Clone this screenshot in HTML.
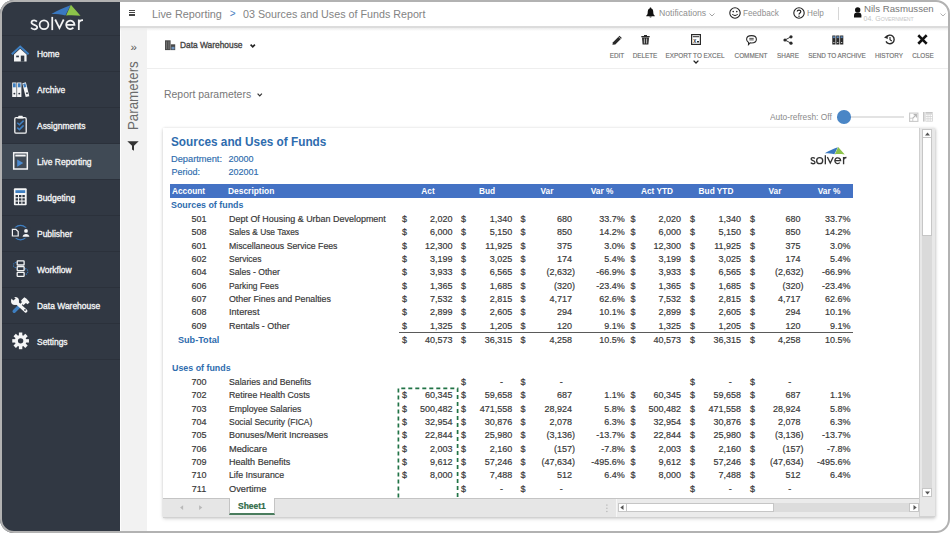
<!DOCTYPE html>
<html><head><meta charset="utf-8">
<style>
*{margin:0;padding:0;box-sizing:border-box}
html,body{width:950px;height:533px;overflow:hidden;background:#fff;font-family:"Liberation Sans",sans-serif}
.a{position:absolute;white-space:nowrap;line-height:normal}
svg.a{overflow:visible}
</style></head><body>
<div class="a" style="left:0;top:0;width:120px;height:533px;background:#313843"></div>
<svg class="a" style="left:0;top:0" width="120" height="36" viewBox="0 0 120 36"><g transform="translate(30.5 30.1)"><path d="M20.9 -16.1 C27 -19.5 33 -22.5 40 -24.9 L34.9 -14.7 C30 -15.8 25 -16.2 20.9 -16.1 Z" fill="#3a78c0"/>
<path d="M40.4 -25.3 L50 -14.3 C45 -15 40 -15 35.6 -14.7 Z" fill="#8cc34a"/>
<g fill="none" stroke="#f2f3f4" stroke-width="1.75">
<path d="M6.4 -8.5 C5.6 -9.4 4.7 -9.8 3.7 -9.8 C2.1 -9.8 1.0 -8.9 1.0 -7.6 C1.0 -4.8 6.7 -5.8 6.7 -2.8 C6.7 -1.5 5.5 -0.85 3.9 -0.85 C2.4 -0.85 1.3 -1.4 0.6 -2.5"/>
<circle cx="13.5" cy="-5.3" r="4.4"/>
<path d="M21.75 -13.2 V0"/>
<path d="M24.7 -10.6 L28.95 -2.0 L33.2 -10.6" stroke-linejoin="miter"/>
<path d="M35.6 -5.3 H44 A4.2 4.2 0 1 0 42.9 -2.4"/>
<path d="M48.3 0 V-10.6 M48.3 -6.2 C48.3 -8.6 50 -9.9 52.5 -9.9"/>
</g></g></svg>
<div class="a" style="left:2px;top:35px;width:118px;height:1px;background:#2b313b"></div>
<div class="a" style="left:2px;top:71px;width:118px;height:1px;background:#2b313b"></div>
<div class="a" style="left:2px;top:107px;width:118px;height:1px;background:#2b313b"></div>
<div class="a" style="left:2px;top:143px;width:118px;height:1px;background:#2b313b"></div>
<div class="a" style="left:2px;top:179px;width:118px;height:1px;background:#2b313b"></div>
<div class="a" style="left:2px;top:215px;width:118px;height:1px;background:#2b313b"></div>
<div class="a" style="left:2px;top:251px;width:118px;height:1px;background:#2b313b"></div>
<div class="a" style="left:2px;top:287px;width:118px;height:1px;background:#2b313b"></div>
<div class="a" style="left:2px;top:323px;width:118px;height:1px;background:#2b313b"></div>
<div class="a" style="left:2px;top:359px;width:118px;height:1px;background:#2b313b"></div>
<div class="a" style="left:2px;top:144px;width:118px;height:35px;background:#404a55"></div>
<div class="a" style="left:36.80px;top:49.06px;font-size:9px;color:#f2f3f4;font-weight:400;transform:scaleX(0.94);transform-origin:0 0;-webkit-text-stroke:0.35px #f2f3f4;">Home</div>
<div class="a" style="left:36.80px;top:85.06px;font-size:9px;color:#f2f3f4;font-weight:400;transform:scaleX(0.94);transform-origin:0 0;-webkit-text-stroke:0.35px #f2f3f4;">Archive</div>
<div class="a" style="left:36.80px;top:121.05px;font-size:9px;color:#f2f3f4;font-weight:400;transform:scaleX(0.94);transform-origin:0 0;-webkit-text-stroke:0.35px #f2f3f4;">Assignments</div>
<div class="a" style="left:36.80px;top:157.05px;font-size:9px;color:#f2f3f4;font-weight:400;transform:scaleX(0.94);transform-origin:0 0;-webkit-text-stroke:0.35px #f2f3f4;">Live Reporting</div>
<div class="a" style="left:36.80px;top:193.05px;font-size:9px;color:#f2f3f4;font-weight:400;transform:scaleX(0.94);transform-origin:0 0;-webkit-text-stroke:0.35px #f2f3f4;">Budgeting</div>
<div class="a" style="left:36.80px;top:229.05px;font-size:9px;color:#f2f3f4;font-weight:400;transform:scaleX(0.94);transform-origin:0 0;-webkit-text-stroke:0.35px #f2f3f4;">Publisher</div>
<div class="a" style="left:36.80px;top:265.06px;font-size:9px;color:#f2f3f4;font-weight:400;transform:scaleX(0.94);transform-origin:0 0;-webkit-text-stroke:0.35px #f2f3f4;">Workflow</div>
<div class="a" style="left:36.80px;top:301.06px;font-size:9px;color:#f2f3f4;font-weight:400;transform:scaleX(0.94);transform-origin:0 0;-webkit-text-stroke:0.35px #f2f3f4;">Data Warehouse</div>
<div class="a" style="left:36.80px;top:337.06px;font-size:9px;color:#f2f3f4;font-weight:400;transform:scaleX(0.94);transform-origin:0 0;-webkit-text-stroke:0.35px #f2f3f4;">Settings</div>
<svg class="a" style="left:8px;top:42px" width="24" height="24" viewBox="8 42 24 24"><path d="M11.8 54.3 L20.2 46.6 L28.6 54.3" fill="none" stroke="#3e7fc1" stroke-width="2"/><path d="M14 54.5 L20.2 48.8 L26.6 54.5 V61.6 H14 Z" fill="#f4f5f6"/><rect x="16.2" y="55.6" width="2.7" height="1.7" fill="#313843"/><rect x="20.8" y="55.6" width="3.5" height="6.1" fill="#313843"/></svg>
<svg class="a" style="left:8px;top:78px" width="24" height="24" viewBox="8 78 24 24"><rect x="12.2" y="82.5" width="4.3" height="14.5" fill="#f4f5f6"/><rect x="17.1" y="82.5" width="4.3" height="14.5" fill="#f4f5f6"/><path d="M22.3 83.2 L25.9 82.3 L29.3 96.2 L25.7 97.1 Z" fill="#f4f5f6"/><rect x="13" y="83.3" width="2.7" height="4" fill="#3e7fc1"/><rect x="17.9" y="83.3" width="2.7" height="4" fill="#3e7fc1"/><path d="M23.1 83.9 L25.4 83.3 L26.3 87 L24 87.6 Z" fill="#3e7fc1"/><circle cx="14.35" cy="93.6" r="0.95" fill="#313843"/><circle cx="19.25" cy="93.6" r="0.95" fill="#313843"/><circle cx="27" cy="93.3" r="0.95" fill="#313843"/></svg>
<svg class="a" style="left:8px;top:112px" width="24" height="24" viewBox="8 112 24 24"><rect x="14.8" y="117.6" width="11.4" height="15.6" rx="1.3" fill="none" stroke="#f4f5f6" stroke-width="1.3"/><path d="M17.3 118.6 L18.6 115.8 H22.4 L23.7 118.6 Z" fill="#f4f5f6"/><path d="M17.3 122.8 L19.4 124.8 L23.6 120.6 M17.3 127.6 L19.4 129.6 L23.6 125.4" fill="none" stroke="#3e7fc1" stroke-width="1.5"/></svg>
<svg class="a" style="left:8px;top:148px" width="24" height="24" viewBox="8 148 24 24"><rect x="13.7" y="152.8" width="13.6" height="16.2" fill="none" stroke="#f4f5f6" stroke-width="1.5"/><rect x="15.3" y="154.6" width="10.4" height="1.9" fill="#f4f5f6"/><path d="M17.2 159.4 L23.3 163 L17.2 166.7 Z" fill="#4a8ad0"/></svg>
<svg class="a" style="left:8px;top:184px" width="24" height="24" viewBox="8 184 24 24"><rect x="13.9" y="188.2" width="12.8" height="17.1" rx="1" fill="#f4f5f6"/><rect x="15.4" y="190.2" width="9.8" height="2.8" fill="#3e7fc1"/><rect x="15.6" y="195.0" width="2.4" height="2.2" fill="#313843"/><rect x="19.0" y="195.0" width="2.4" height="2.2" fill="#313843"/><rect x="22.4" y="195.0" width="2.4" height="2.2" fill="#313843"/><rect x="15.6" y="198.3" width="2.4" height="2.2" fill="#313843"/><rect x="19.0" y="198.3" width="2.4" height="2.2" fill="#313843"/><rect x="22.4" y="198.3" width="2.4" height="2.2" fill="#313843"/><rect x="15.6" y="201.6" width="2.4" height="2.2" fill="#313843"/><rect x="19.0" y="201.6" width="2.4" height="2.2" fill="#313843"/><rect x="22.4" y="201.6" width="2.4" height="2.2" fill="#313843"/></svg>
<svg class="a" style="left:8px;top:222px" width="26" height="20" viewBox="8 222 26 20"><circle cx="20.5" cy="232.6" r="7.2" fill="none" stroke="#3e7fc1" stroke-width="1.2"/><rect x="10.5" y="227.5" width="9" height="10.5" fill="#313843"/><rect x="21" y="227.8" width="9.5" height="10" fill="#313843"/><path d="M12.4 229.3 H15.9 L18.2 231.6 V236 H12.4 Z" fill="none" stroke="#f4f5f6" stroke-width="1.2"/><circle cx="26" cy="230.9" r="1.9" fill="#f4f5f6"/><path d="M22.6 236.8 C22.6 232.9 29.4 232.9 29.4 236.8 Z" fill="#f4f5f6"/></svg>
<svg class="a" style="left:8px;top:256px" width="24" height="26" viewBox="8 256 24 26"><path d="M16.3 262.4 C12.5 262.6 12.5 267.6 16.3 267.8 M25 268.6 C28.8 268.8 28.8 274.2 25 274.4" fill="none" stroke="#3e7fc1" stroke-width="1.1" stroke-dasharray="1.3 1"/><rect x="17.2" y="260.9" width="6.9" height="4.1" rx="0.6" fill="none" stroke="#f4f5f6" stroke-width="1.3"/><rect x="17.2" y="266.6" width="6.9" height="4.1" rx="0.6" fill="none" stroke="#f4f5f6" stroke-width="1.3"/><rect x="17.2" y="272.3" width="6.9" height="4.1" rx="0.6" fill="none" stroke="#f4f5f6" stroke-width="1.3"/></svg>
<svg class="a" style="left:8px;top:292px" width="24" height="26" viewBox="8 292 24 26"><path d="M14.2 311.2 L18.8 306.7" stroke="#3e7fc1" stroke-width="3.4" stroke-linecap="round"/><path d="M19 306.5 L23.5 302" stroke="#f4f5f6" stroke-width="2"/><path d="M21 300.4 L24.3 297.2 L26.6 298.8 L29.6 302.3 L27.6 304.3 L25.9 302.9 L23.4 305.3 Z" fill="#f4f5f6"/><path d="M16.5 302.5 L25.8 311" stroke="#f4f5f6" stroke-width="3.3" stroke-linecap="round"/><circle cx="15" cy="300.9" r="4" fill="#f4f5f6"/><path d="M13.2 296 L15.6 298.4 L13.4 300.6 L11 298.2 Z" fill="#313843"/><circle cx="25" cy="309.9" r="0.85" fill="#313843"/></svg>
<svg class="a" style="left:8px;top:328px" width="24" height="24" viewBox="8 328 24 24"><g fill="#f4f5f6"><rect x="18.9" y="332.5" width="3.4" height="4" transform="rotate(0 20.6 340.85)"/><rect x="18.9" y="332.5" width="3.4" height="4" transform="rotate(45 20.6 340.85)"/><rect x="18.9" y="332.5" width="3.4" height="4" transform="rotate(90 20.6 340.85)"/><rect x="18.9" y="332.5" width="3.4" height="4" transform="rotate(135 20.6 340.85)"/><rect x="18.9" y="332.5" width="3.4" height="4" transform="rotate(180 20.6 340.85)"/><rect x="18.9" y="332.5" width="3.4" height="4" transform="rotate(225 20.6 340.85)"/><rect x="18.9" y="332.5" width="3.4" height="4" transform="rotate(270 20.6 340.85)"/><rect x="18.9" y="332.5" width="3.4" height="4" transform="rotate(315 20.6 340.85)"/><circle cx="20.6" cy="340.85" r="5.8"/></g><circle cx="20.6" cy="340.85" r="2.7" fill="#313843"/></svg>
<div class="a" style="left:120px;top:0;width:830px;height:26px;background:#fff"></div>
<div class="a" style="left:128.5px;top:9.6px;width:6.5px;height:1.3px;background:#444"></div>
<div class="a" style="left:128.5px;top:12.0px;width:6.5px;height:1.3px;background:#444"></div>
<div class="a" style="left:128.5px;top:14.4px;width:6.5px;height:1.3px;background:#444"></div>
<div class="a" style="left:151.60px;top:7.85px;font-size:11px;color:#838383;font-weight:400;transform:scaleX(0.985);transform-origin:0 0;">Live Reporting</div>
<div class="a" style="left:229.80px;top:8.45px;font-size:10px;color:#4a80bf;font-weight:400;">&gt;</div>
<div class="a" style="left:243.30px;top:7.85px;font-size:11px;color:#838383;font-weight:400;transform:scaleX(0.975);transform-origin:0 0;">03 Sources and Uses of Funds Report</div>
<svg class="a" style="left:645.5px;top:7px" width="9" height="11" viewBox="0 0 9 11"><path d="M4.5 0.5 C5.2 0.5 5.3 1 5.3 1.4 C7 2 7.3 3.5 7.3 5.5 C7.3 7.5 8.2 8.3 8.8 8.8 V9.2 H0.2 V8.8 C0.8 8.3 1.7 7.5 1.7 5.5 C1.7 3.5 2 2 3.7 1.4 C3.7 1 3.8 0.5 4.5 0.5 Z" fill="#111"/><path d="M3.3 9.5 C3.5 10.7 5.5 10.7 5.7 9.5 Z" fill="#111"/></svg>
<div class="a" style="left:658.50px;top:8.34px;font-size:8.8px;color:#8f8f8f;font-weight:400;transform:scaleX(0.985);transform-origin:0 0;">Notifications</div>
<svg class="a" style="left:709px;top:12.5px" width="6" height="4" viewBox="0 0 6 4"><path d="M0.5 0.5 L3 3 L5.5 0.5" fill="none" stroke="#999" stroke-width="0.9"/></svg>
<svg class="a" style="left:729px;top:6.5px" width="12" height="12" viewBox="0 0 12 12"><circle cx="6" cy="6" r="5.2" fill="none" stroke="#222" stroke-width="1.1"/><circle cx="4.2" cy="4.6" r="0.8" fill="#222"/><circle cx="7.8" cy="4.6" r="0.8" fill="#222"/><path d="M3.3 7 C4.2 9 7.8 9 8.7 7" fill="none" stroke="#222" stroke-width="1"/></svg>
<div class="a" style="left:743.00px;top:8.34px;font-size:8.8px;color:#8f8f8f;font-weight:400;transform:scaleX(0.93);transform-origin:0 0;">Feedback</div>
<svg class="a" style="left:792.5px;top:6.5px" width="12" height="12" viewBox="0 0 12 12"><circle cx="6" cy="6" r="5.2" fill="none" stroke="#222" stroke-width="1.1"/><path d="M4.2 4.6 C4.2 2.6 7.8 2.6 7.8 4.6 C7.8 5.9 6 6 6 7.5" fill="none" stroke="#222" stroke-width="1.2"/><circle cx="6" cy="9.2" r="0.75" fill="#222"/></svg>
<div class="a" style="left:807.20px;top:8.34px;font-size:8.8px;color:#8f8f8f;font-weight:400;transform:scaleX(0.93);transform-origin:0 0;">Help</div>
<div class="a" style="left:838px;top:6.5px;width:1px;height:13px;background:#d6d6d6"></div>
<svg class="a" style="left:852px;top:5px" width="12" height="15" viewBox="852 5 12 15"><circle cx="857.7" cy="9.9" r="2.7" fill="#111"/><path d="M854 17.6 V15.2 C854 13.3 855.5 12.6 857.7 12.6 C859.9 12.6 861.4 13.3 861.4 15.2 V17.6 Z" fill="#111"/></svg>
<div class="a" style="left:863.50px;top:3.03px;font-size:9.8px;color:#777;font-weight:400;transform:scaleX(0.985);transform-origin:0 0;">Nils Rasmussen</div>
<div class="a" style="left:863.50px;top:14.86px;font-size:7px;color:#c4c4c4;font-weight:400;">04. G<span style="font-size:5.2px">OVERNMENT</span></div>
<svg class="a" style="left:939.5px;top:12.5px" width="6" height="4" viewBox="0 0 6 4"><path d="M0.5 0.5 L3 3 L5.5 0.5" fill="none" stroke="#aaa" stroke-width="0.9"/></svg>
<div class="a" style="left:120px;top:26px;width:27px;height:507px;background:#f2f2f2;border-left:1.5px solid #fdfdfd"></div>
<div class="a" style="left:130.60px;top:41.39px;font-size:11.5px;color:#555;font-weight:400;">&raquo;</div>
<div class="a" style="left:125.7px;top:130.3px;width:0;height:0"><div style="position:absolute;left:0;top:0;transform:rotate(-90deg) scaleX(0.95);transform-origin:0 0;font-size:14px;color:#6a6a6a;white-space:nowrap;line-height:1">Parameters</div></div>
<svg class="a" style="left:127px;top:141px" width="12" height="10" viewBox="0 0 12 10"><path d="M0.3 0.3 H11.7 L7 4.8 V9.7 L5 8.5 V4.8 Z" fill="#333"/></svg>
<div class="a" style="left:147px;top:29px;width:803px;height:504px;background:#fff"></div>
<div class="a" style="left:147px;top:68px;width:803px;height:1px;background:#eeeeee"></div>
<div class="a" style="left:120px;top:26.4px;width:830px;height:1.3px;background:#dcdcdc"></div>
<div class="a" style="left:120px;top:27.7px;width:830px;height:3px;background:linear-gradient(#ececec,rgba(250,250,250,0))"></div>
<svg class="a" style="left:164px;top:39px" width="13" height="13" viewBox="164 39 13 13"><rect x="165" y="40.3" width="5.6" height="9.8" fill="#4a4a4a"/><rect x="166.1" y="41.5" width="1" height="7.5" fill="#777"/><rect x="168.4" y="41.5" width="1" height="7.5" fill="#777"/><rect x="170.8" y="44.3" width="4.4" height="5.8" fill="#4a4a4a"/><rect x="171.5" y="46.8" width="3" height="2.6" fill="#6f93bd"/></svg>
<div class="a" style="left:180.30px;top:40.16px;font-size:9px;color:#464646;font-weight:400;transform:scaleX(0.93);transform-origin:0 0;-webkit-text-stroke:0.35px #464646;">Data Warehouse</div>
<svg class="a" style="left:249.8px;top:43.5px" width="5.5" height="4" viewBox="0 0 5.5 4"><path d="M0.6 0.6 L2.75 2.9 L4.9 0.6" fill="none" stroke="#222" stroke-width="1.6"/></svg>
<div class="a" style="left:616.60px;top:50.80px;width:0;"><div style="position:absolute;left:0;top:0;white-space:nowrap;transform:translateX(-50%) scaleX(0.86);transform-origin:50% 0;font-size:7.4px;color:#707070;font-weight:400;-webkit-text-stroke:0.15px #707070;">EDIT</div></div>
<div class="a" style="left:645.00px;top:50.80px;width:0;"><div style="position:absolute;left:0;top:0;white-space:nowrap;transform:translateX(-50%) scaleX(0.86);transform-origin:50% 0;font-size:7.4px;color:#707070;font-weight:400;-webkit-text-stroke:0.15px #707070;">DELETE</div></div>
<div class="a" style="left:695.30px;top:50.80px;width:0;"><div style="position:absolute;left:0;top:0;white-space:nowrap;transform:translateX(-50%) scaleX(0.86);transform-origin:50% 0;font-size:7.4px;color:#707070;font-weight:400;-webkit-text-stroke:0.15px #707070;">EXPORT TO EXCEL</div></div>
<div class="a" style="left:750.80px;top:50.80px;width:0;"><div style="position:absolute;left:0;top:0;white-space:nowrap;transform:translateX(-50%) scaleX(0.86);transform-origin:50% 0;font-size:7.4px;color:#707070;font-weight:400;-webkit-text-stroke:0.15px #707070;">COMMENT</div></div>
<div class="a" style="left:788.00px;top:50.80px;width:0;"><div style="position:absolute;left:0;top:0;white-space:nowrap;transform:translateX(-50%) scaleX(0.86);transform-origin:50% 0;font-size:7.4px;color:#707070;font-weight:400;-webkit-text-stroke:0.15px #707070;">SHARE</div></div>
<div class="a" style="left:837.00px;top:50.80px;width:0;"><div style="position:absolute;left:0;top:0;white-space:nowrap;transform:translateX(-50%) scaleX(0.86);transform-origin:50% 0;font-size:7.4px;color:#707070;font-weight:400;-webkit-text-stroke:0.15px #707070;">SEND TO ARCHIVE</div></div>
<div class="a" style="left:889.20px;top:50.80px;width:0;"><div style="position:absolute;left:0;top:0;white-space:nowrap;transform:translateX(-50%) scaleX(0.86);transform-origin:50% 0;font-size:7.4px;color:#707070;font-weight:400;-webkit-text-stroke:0.15px #707070;">HISTORY</div></div>
<div class="a" style="left:922.80px;top:50.80px;width:0;"><div style="position:absolute;left:0;top:0;white-space:nowrap;transform:translateX(-50%) scaleX(0.86);transform-origin:50% 0;font-size:7.4px;color:#707070;font-weight:400;-webkit-text-stroke:0.15px #707070;">CLOSE</div></div>
<svg class="a" style="left:611.5px;top:34.5px" width="10.5" height="10" viewBox="0 0 10.5 10"><path d="M1 7.2 L7.5 0.7 L9.8 3 L3.3 9.5 L0.4 9.8 Z" fill="#2a2a2a"/><path d="M6.5 1.7 L8.8 4" stroke="#fff" stroke-width="0.6"/></svg>
<svg class="a" style="left:640.7px;top:35.3px" width="9" height="9.5" viewBox="0 0 9 9.5"><rect x="0.3" y="1" width="8.4" height="1.3" fill="#2a2a2a"/><rect x="3" y="0" width="3" height="1.2" fill="#2a2a2a"/><path d="M1 2.6 H8 L7.4 9.5 H1.6 Z" fill="#2a2a2a"/><rect x="2.9" y="3.5" width="0.7" height="5" fill="#fff"/><rect x="5.4" y="3.5" width="0.7" height="5" fill="#fff"/></svg>
<svg class="a" style="left:691px;top:34px" width="10" height="11" viewBox="0 0 10 11"><rect x="0.6" y="0.6" width="8.8" height="9.8" fill="none" stroke="#2a2a2a" stroke-width="1.2"/><rect x="1.8" y="2.2" width="6.4" height="1" fill="#2a2a2a"/><text x="2.2" y="8.6" font-size="4.6" font-weight="700" fill="#2a2a2a" font-family="Liberation Sans">X</text><rect x="6" y="7" width="2" height="1.5" fill="#2a2a2a"/></svg>
<svg class="a" style="left:692.8px;top:60px" width="6" height="4" viewBox="0 0 6 4"><path d="M0.6 0.6 L3 3 L5.4 0.6" fill="none" stroke="#222" stroke-width="1.3"/></svg>
<svg class="a" style="left:745.5px;top:34.5px" width="11" height="10" viewBox="0 0 11 10"><path d="M5.5 0.6 C8.5 0.6 10.4 2.3 10.4 4.3 C10.4 6.3 8.5 8 5.5 8 C5 8 4.6 8 4.2 7.9 L2.5 9.6 L2.6 7.4 C1.3 6.7 0.6 5.6 0.6 4.3 C0.6 2.3 2.5 0.6 5.5 0.6 Z" fill="none" stroke="#2a2a2a" stroke-width="1.1"/><rect x="3.3" y="2.9" width="4.4" height="0.8" fill="#2a2a2a"/><rect x="3.3" y="4.5" width="4.4" height="0.8" fill="#2a2a2a"/></svg>
<svg class="a" style="left:783px;top:34.5px" width="10" height="10" viewBox="0 0 10 10"><circle cx="8" cy="1.8" r="1.6" fill="#2a2a2a"/><circle cx="2" cy="5" r="1.6" fill="#2a2a2a"/><circle cx="8" cy="8.2" r="1.6" fill="#2a2a2a"/><path d="M8 1.8 L2 5 L8 8.2" fill="none" stroke="#2a2a2a" stroke-width="0.9"/></svg>
<svg class="a" style="left:831.5px;top:35px" width="12" height="10" viewBox="0 0 12 10"><rect x="0.3" y="0.5" width="3.2" height="9" fill="#2a2a2a"/><rect x="4.2" y="0.5" width="3.2" height="9" fill="#2a2a2a"/><rect x="8.1" y="0.5" width="3.2" height="9" fill="#2a2a2a"/><rect x="0.9" y="1.3" width="2" height="1.8" fill="#5a86b8"/><rect x="4.8" y="1.3" width="2" height="1.8" fill="#5a86b8"/><rect x="8.7" y="1.3" width="2" height="1.8" fill="#5a86b8"/><circle cx="1.9" cy="7.5" r="0.6" fill="#fff"/><circle cx="5.8" cy="7.5" r="0.6" fill="#fff"/><circle cx="9.7" cy="7.5" r="0.6" fill="#fff"/></svg>
<svg class="a" style="left:883.5px;top:34.3px" width="11" height="11" viewBox="0 0 11 11"><path d="M2.2 3.2 A4.3 4.3 0 1 1 2 7.4" fill="none" stroke="#2a2a2a" stroke-width="1.4"/><path d="M0 3.6 L3.8 5 L3.6 1 Z" fill="#2a2a2a"/><path d="M6 3 V5.8 L7.8 7" fill="none" stroke="#2a2a2a" stroke-width="1.1"/></svg>
<svg class="a" style="left:918.3px;top:35px" width="9" height="9" viewBox="0 0 9 9"><path d="M1.2 1.2 L7.8 7.8 M7.8 1.2 L1.2 7.8" stroke="#111" stroke-width="2.6" stroke-linecap="square"/></svg>
<div class="a" style="left:163.50px;top:88.14px;font-size:11px;color:#777;font-weight:400;transform:scaleX(0.95);transform-origin:0 0;">Report parameters</div>
<svg class="a" style="left:256.8px;top:92.5px" width="5.5" height="4" viewBox="0 0 5.5 4"><path d="M0.6 0.6 L2.75 2.9 L4.9 0.6" fill="none" stroke="#333" stroke-width="1.2"/></svg>
<div class="a" style="left:769.50px;top:112.02px;font-size:8.6px;color:#8a8a8a;font-weight:400;transform:scaleX(0.975);transform-origin:0 0;">Auto-refresh: Off</div>
<div class="a" style="left:843px;top:116.1px;width:61px;height:1.8px;background:#e3e3e3"></div>
<div class="a" style="left:837px;top:110.3px;width:13.6px;height:13.4px;border-radius:50%;background:#4a86c6"></div>
<svg class="a" style="left:906px;top:110px" width="30" height="14" viewBox="906 110 30 14"><rect x="909.6" y="113.1" width="8.3" height="8.3" fill="none" stroke="#cacaca" stroke-width="1.1"/><rect x="909.6" y="118.2" width="3.2" height="3.2" fill="none" stroke="#cacaca" stroke-width="0.9"/><path d="M912.8 118.2 L916.2 114.8 M913.6 114.6 H916.4 V117.4" fill="none" stroke="#b5b5b5" stroke-width="1.1"/><rect x="923" y="112" width="1.6" height="9.6" fill="#c6c6c6"/><rect x="925.4" y="112" width="7.3" height="1.7" fill="#c6c6c6"/><g fill="none" stroke="#d2d2d2" stroke-width="0.8"><rect x="925.8" y="114.2" width="6.6" height="7"/><path d="M928 114.2 V121.2 M930.2 114.2 V121.2 M925.8 116.5 H932.4 M925.8 118.8 H932.4"/></g></svg>
<div class="a" style="left:163px;top:127.8px;width:771.5px;height:389.7px;background:#fff;box-shadow:0 0 3px 0.5px rgba(0,0,0,.2),0 2px 4px rgba(0,0,0,.12)"></div>
<div class="a" style="left:171.00px;top:135.21px;font-size:12.7px;color:#2e6cae;font-weight:700;transform:scaleX(0.93);transform-origin:0 0;">Sources and Uses of Funds</div>
<div class="a" style="left:170.90px;top:153.66px;font-size:9px;color:#2e6cae;font-weight:400;transform:scaleX(1.03);transform-origin:0 0;-webkit-text-stroke:0.15px #2e6cae">Department:</div>
<div class="a" style="left:228.40px;top:153.66px;font-size:9px;color:#2e6cae;font-weight:400;-webkit-text-stroke:0.15px #2e6cae">20000</div>
<div class="a" style="left:171.60px;top:166.75px;font-size:9px;color:#2e6cae;font-weight:400;-webkit-text-stroke:0.15px #2e6cae">Period:</div>
<div class="a" style="left:228.40px;top:166.75px;font-size:9px;color:#2e6cae;font-weight:400;-webkit-text-stroke:0.15px #2e6cae">202001</div>
<svg class="a" style="left:800px;top:140px" width="60" height="30" viewBox="800 140 60 30"><g transform="translate(810.4 164.3) scale(0.687)"><path d="M20.9 -16.1 C27 -19.5 33 -22.5 40 -24.9 L34.9 -14.7 C30 -15.8 25 -16.2 20.9 -16.1 Z" fill="#3a78c0"/>
<path d="M40.4 -25.3 L50 -14.3 C45 -15 40 -15 35.6 -14.7 Z" fill="#8cc34a"/>
<g fill="none" stroke="#333" stroke-width="1.95">
<path d="M6.4 -8.5 C5.6 -9.4 4.7 -9.8 3.7 -9.8 C2.1 -9.8 1.0 -8.9 1.0 -7.6 C1.0 -4.8 6.7 -5.8 6.7 -2.8 C6.7 -1.5 5.5 -0.85 3.9 -0.85 C2.4 -0.85 1.3 -1.4 0.6 -2.5"/>
<circle cx="13.5" cy="-5.3" r="4.4"/>
<path d="M21.75 -13.2 V0"/>
<path d="M24.7 -10.6 L28.95 -2.0 L33.2 -10.6" stroke-linejoin="miter"/>
<path d="M35.6 -5.3 H44 A4.2 4.2 0 1 0 42.9 -2.4"/>
<path d="M48.3 0 V-10.6 M48.3 -6.2 C48.3 -8.6 50 -9.9 52.5 -9.9"/>
</g></g></svg>
<div class="a" style="left:170px;top:184.2px;width:683px;height:13.7px;background:#4472c4"></div>
<div class="a" style="left:171.60px;top:186.35px;font-size:9px;color:#fff;font-weight:700;transform:scaleX(0.917);transform-origin:0 0;">Account</div>
<div class="a" style="left:228.40px;top:186.35px;font-size:9px;color:#fff;font-weight:700;transform:scaleX(0.935);transform-origin:0 0;">Description</div>
<div class="a" style="left:428.10px;top:186.35px;width:0;"><div style="position:absolute;left:0;top:0;white-space:nowrap;transform:translateX(-50%) scaleX(0.92);transform-origin:50% 0;font-size:9px;color:#fff;font-weight:700;">Act</div></div>
<div class="a" style="left:487.40px;top:186.35px;width:0;"><div style="position:absolute;left:0;top:0;white-space:nowrap;transform:translateX(-50%) scaleX(0.92);transform-origin:50% 0;font-size:9px;color:#fff;font-weight:700;">Bud</div></div>
<div class="a" style="left:546.90px;top:186.35px;width:0;"><div style="position:absolute;left:0;top:0;white-space:nowrap;transform:translateX(-50%) scaleX(0.92);transform-origin:50% 0;font-size:9px;color:#fff;font-weight:700;">Var</div></div>
<div class="a" style="left:601.80px;top:186.35px;width:0;"><div style="position:absolute;left:0;top:0;white-space:nowrap;transform:translateX(-50%) scaleX(0.92);transform-origin:50% 0;font-size:9px;color:#fff;font-weight:700;">Var %</div></div>
<div class="a" style="left:656.50px;top:186.35px;width:0;"><div style="position:absolute;left:0;top:0;white-space:nowrap;transform:translateX(-50%) scaleX(0.92);transform-origin:50% 0;font-size:9px;color:#fff;font-weight:700;">Act YTD</div></div>
<div class="a" style="left:716.00px;top:186.35px;width:0;"><div style="position:absolute;left:0;top:0;white-space:nowrap;transform:translateX(-50%) scaleX(0.92);transform-origin:50% 0;font-size:9px;color:#fff;font-weight:700;">Bud YTD</div></div>
<div class="a" style="left:775.30px;top:186.35px;width:0;"><div style="position:absolute;left:0;top:0;white-space:nowrap;transform:translateX(-50%) scaleX(0.92);transform-origin:50% 0;font-size:9px;color:#fff;font-weight:700;">Var</div></div>
<div class="a" style="left:829.00px;top:186.35px;width:0;"><div style="position:absolute;left:0;top:0;white-space:nowrap;transform:translateX(-50%) scaleX(0.92);transform-origin:50% 0;font-size:9px;color:#fff;font-weight:700;">Var %</div></div>
<div class="a" style="left:171.10px;top:200.47px;font-size:9.2px;color:#2e6cae;font-weight:700;transform:scaleX(0.965);transform-origin:0 0;">Sources of funds</div>
<div class="a" style="left:199.00px;top:214.16px;width:0;"><div style="position:absolute;left:0;top:0;white-space:nowrap;transform:translateX(-50%) scaleX(1.0);transform-origin:50% 0;font-size:9px;color:#383838;font-weight:400;-webkit-text-stroke:0.18px #383838;">501</div></div>
<div class="a" style="left:228.70px;top:214.16px;font-size:9px;color:#383838;font-weight:400;transform:scaleX(0.995);transform-origin:0 0;-webkit-text-stroke:0.18px #383838;">Dept Of Housing &amp; Urban Development</div>
<div class="a" style="left:402.00px;top:214.16px;font-size:9px;color:#383838;font-weight:400;-webkit-text-stroke:0.18px #383838;">$</div>
<div class="a" style="left:461.00px;top:214.16px;font-size:9px;color:#383838;font-weight:400;-webkit-text-stroke:0.18px #383838;">$</div>
<div class="a" style="left:520.60px;top:214.16px;font-size:9px;color:#383838;font-weight:400;-webkit-text-stroke:0.18px #383838;">$</div>
<div class="a" style="left:630.60px;top:214.16px;font-size:9px;color:#383838;font-weight:400;-webkit-text-stroke:0.18px #383838;">$</div>
<div class="a" style="left:690.00px;top:214.16px;font-size:9px;color:#383838;font-weight:400;-webkit-text-stroke:0.18px #383838;">$</div>
<div class="a" style="left:750.00px;top:214.16px;font-size:9px;color:#383838;font-weight:400;-webkit-text-stroke:0.18px #383838;">$</div>
<div class="a" style="right:497.40px;top:214.16px;font-size:9px;color:#383838;font-weight:400;-webkit-text-stroke:0.18px #383838;">2,020</div>
<div class="a" style="right:437.80px;top:214.16px;font-size:9px;color:#383838;font-weight:400;-webkit-text-stroke:0.18px #383838;">1,340</div>
<div class="a" style="right:378.00px;top:214.16px;font-size:9px;color:#383838;font-weight:400;-webkit-text-stroke:0.18px #383838;">680</div>
<div class="a" style="right:325.30px;top:214.16px;font-size:9px;color:#383838;font-weight:400;-webkit-text-stroke:0.18px #383838;">33.7%</div>
<div class="a" style="right:269.00px;top:214.16px;font-size:9px;color:#383838;font-weight:400;-webkit-text-stroke:0.18px #383838;">2,020</div>
<div class="a" style="right:209.00px;top:214.16px;font-size:9px;color:#383838;font-weight:400;-webkit-text-stroke:0.18px #383838;">1,340</div>
<div class="a" style="right:149.50px;top:214.16px;font-size:9px;color:#383838;font-weight:400;-webkit-text-stroke:0.18px #383838;">680</div>
<div class="a" style="right:99.40px;top:214.16px;font-size:9px;color:#383838;font-weight:400;-webkit-text-stroke:0.18px #383838;">33.7%</div>
<div class="a" style="left:199.00px;top:227.49px;width:0;"><div style="position:absolute;left:0;top:0;white-space:nowrap;transform:translateX(-50%) scaleX(1.0);transform-origin:50% 0;font-size:9px;color:#383838;font-weight:400;-webkit-text-stroke:0.18px #383838;">508</div></div>
<div class="a" style="left:228.70px;top:227.49px;font-size:9px;color:#383838;font-weight:400;transform:scaleX(0.9293300000000001);transform-origin:0 0;-webkit-text-stroke:0.18px #383838;">Sales &amp; Use Taxes</div>
<div class="a" style="left:402.00px;top:227.49px;font-size:9px;color:#383838;font-weight:400;-webkit-text-stroke:0.18px #383838;">$</div>
<div class="a" style="left:461.00px;top:227.49px;font-size:9px;color:#383838;font-weight:400;-webkit-text-stroke:0.18px #383838;">$</div>
<div class="a" style="left:520.60px;top:227.49px;font-size:9px;color:#383838;font-weight:400;-webkit-text-stroke:0.18px #383838;">$</div>
<div class="a" style="left:630.60px;top:227.49px;font-size:9px;color:#383838;font-weight:400;-webkit-text-stroke:0.18px #383838;">$</div>
<div class="a" style="left:690.00px;top:227.49px;font-size:9px;color:#383838;font-weight:400;-webkit-text-stroke:0.18px #383838;">$</div>
<div class="a" style="left:750.00px;top:227.49px;font-size:9px;color:#383838;font-weight:400;-webkit-text-stroke:0.18px #383838;">$</div>
<div class="a" style="right:497.40px;top:227.49px;font-size:9px;color:#383838;font-weight:400;-webkit-text-stroke:0.18px #383838;">6,000</div>
<div class="a" style="right:437.80px;top:227.49px;font-size:9px;color:#383838;font-weight:400;-webkit-text-stroke:0.18px #383838;">5,150</div>
<div class="a" style="right:378.00px;top:227.49px;font-size:9px;color:#383838;font-weight:400;-webkit-text-stroke:0.18px #383838;">850</div>
<div class="a" style="right:325.30px;top:227.49px;font-size:9px;color:#383838;font-weight:400;-webkit-text-stroke:0.18px #383838;">14.2%</div>
<div class="a" style="right:269.00px;top:227.49px;font-size:9px;color:#383838;font-weight:400;-webkit-text-stroke:0.18px #383838;">6,000</div>
<div class="a" style="right:209.00px;top:227.49px;font-size:9px;color:#383838;font-weight:400;-webkit-text-stroke:0.18px #383838;">5,150</div>
<div class="a" style="right:149.50px;top:227.49px;font-size:9px;color:#383838;font-weight:400;-webkit-text-stroke:0.18px #383838;">850</div>
<div class="a" style="right:99.40px;top:227.49px;font-size:9px;color:#383838;font-weight:400;-webkit-text-stroke:0.18px #383838;">14.2%</div>
<div class="a" style="left:199.00px;top:240.81px;width:0;"><div style="position:absolute;left:0;top:0;white-space:nowrap;transform:translateX(-50%) scaleX(1.0);transform-origin:50% 0;font-size:9px;color:#383838;font-weight:400;-webkit-text-stroke:0.18px #383838;">601</div></div>
<div class="a" style="left:228.70px;top:240.81px;font-size:9px;color:#383838;font-weight:400;transform:scaleX(0.968135);transform-origin:0 0;-webkit-text-stroke:0.18px #383838;">Miscellaneous Service Fees</div>
<div class="a" style="left:402.00px;top:240.81px;font-size:9px;color:#383838;font-weight:400;-webkit-text-stroke:0.18px #383838;">$</div>
<div class="a" style="left:461.00px;top:240.81px;font-size:9px;color:#383838;font-weight:400;-webkit-text-stroke:0.18px #383838;">$</div>
<div class="a" style="left:520.60px;top:240.81px;font-size:9px;color:#383838;font-weight:400;-webkit-text-stroke:0.18px #383838;">$</div>
<div class="a" style="left:630.60px;top:240.81px;font-size:9px;color:#383838;font-weight:400;-webkit-text-stroke:0.18px #383838;">$</div>
<div class="a" style="left:690.00px;top:240.81px;font-size:9px;color:#383838;font-weight:400;-webkit-text-stroke:0.18px #383838;">$</div>
<div class="a" style="left:750.00px;top:240.81px;font-size:9px;color:#383838;font-weight:400;-webkit-text-stroke:0.18px #383838;">$</div>
<div class="a" style="right:497.40px;top:240.81px;font-size:9px;color:#383838;font-weight:400;-webkit-text-stroke:0.18px #383838;">12,300</div>
<div class="a" style="right:437.80px;top:240.81px;font-size:9px;color:#383838;font-weight:400;-webkit-text-stroke:0.18px #383838;">11,925</div>
<div class="a" style="right:378.00px;top:240.81px;font-size:9px;color:#383838;font-weight:400;-webkit-text-stroke:0.18px #383838;">375</div>
<div class="a" style="right:325.30px;top:240.81px;font-size:9px;color:#383838;font-weight:400;-webkit-text-stroke:0.18px #383838;">3.0%</div>
<div class="a" style="right:269.00px;top:240.81px;font-size:9px;color:#383838;font-weight:400;-webkit-text-stroke:0.18px #383838;">12,300</div>
<div class="a" style="right:209.00px;top:240.81px;font-size:9px;color:#383838;font-weight:400;-webkit-text-stroke:0.18px #383838;">11,925</div>
<div class="a" style="right:149.50px;top:240.81px;font-size:9px;color:#383838;font-weight:400;-webkit-text-stroke:0.18px #383838;">375</div>
<div class="a" style="right:99.40px;top:240.81px;font-size:9px;color:#383838;font-weight:400;-webkit-text-stroke:0.18px #383838;">3.0%</div>
<div class="a" style="left:199.00px;top:254.15px;width:0;"><div style="position:absolute;left:0;top:0;white-space:nowrap;transform:translateX(-50%) scaleX(1.0);transform-origin:50% 0;font-size:9px;color:#383838;font-weight:400;-webkit-text-stroke:0.18px #383838;">602</div></div>
<div class="a" style="left:228.70px;top:254.15px;font-size:9px;color:#383838;font-weight:400;transform:scaleX(0.9392799999999999);transform-origin:0 0;-webkit-text-stroke:0.18px #383838;">Services</div>
<div class="a" style="left:402.00px;top:254.15px;font-size:9px;color:#383838;font-weight:400;-webkit-text-stroke:0.18px #383838;">$</div>
<div class="a" style="left:461.00px;top:254.15px;font-size:9px;color:#383838;font-weight:400;-webkit-text-stroke:0.18px #383838;">$</div>
<div class="a" style="left:520.60px;top:254.15px;font-size:9px;color:#383838;font-weight:400;-webkit-text-stroke:0.18px #383838;">$</div>
<div class="a" style="left:630.60px;top:254.15px;font-size:9px;color:#383838;font-weight:400;-webkit-text-stroke:0.18px #383838;">$</div>
<div class="a" style="left:690.00px;top:254.15px;font-size:9px;color:#383838;font-weight:400;-webkit-text-stroke:0.18px #383838;">$</div>
<div class="a" style="left:750.00px;top:254.15px;font-size:9px;color:#383838;font-weight:400;-webkit-text-stroke:0.18px #383838;">$</div>
<div class="a" style="right:497.40px;top:254.15px;font-size:9px;color:#383838;font-weight:400;-webkit-text-stroke:0.18px #383838;">3,199</div>
<div class="a" style="right:437.80px;top:254.15px;font-size:9px;color:#383838;font-weight:400;-webkit-text-stroke:0.18px #383838;">3,025</div>
<div class="a" style="right:378.00px;top:254.15px;font-size:9px;color:#383838;font-weight:400;-webkit-text-stroke:0.18px #383838;">174</div>
<div class="a" style="right:325.30px;top:254.15px;font-size:9px;color:#383838;font-weight:400;-webkit-text-stroke:0.18px #383838;">5.4%</div>
<div class="a" style="right:269.00px;top:254.15px;font-size:9px;color:#383838;font-weight:400;-webkit-text-stroke:0.18px #383838;">3,199</div>
<div class="a" style="right:209.00px;top:254.15px;font-size:9px;color:#383838;font-weight:400;-webkit-text-stroke:0.18px #383838;">3,025</div>
<div class="a" style="right:149.50px;top:254.15px;font-size:9px;color:#383838;font-weight:400;-webkit-text-stroke:0.18px #383838;">174</div>
<div class="a" style="right:99.40px;top:254.15px;font-size:9px;color:#383838;font-weight:400;-webkit-text-stroke:0.18px #383838;">5.4%</div>
<div class="a" style="left:199.00px;top:267.48px;width:0;"><div style="position:absolute;left:0;top:0;white-space:nowrap;transform:translateX(-50%) scaleX(1.0);transform-origin:50% 0;font-size:9px;color:#383838;font-weight:400;-webkit-text-stroke:0.18px #383838;">604</div></div>
<div class="a" style="left:228.70px;top:267.48px;font-size:9px;color:#383838;font-weight:400;transform:scaleX(0.958185);transform-origin:0 0;-webkit-text-stroke:0.18px #383838;">Sales - Other</div>
<div class="a" style="left:402.00px;top:267.48px;font-size:9px;color:#383838;font-weight:400;-webkit-text-stroke:0.18px #383838;">$</div>
<div class="a" style="left:461.00px;top:267.48px;font-size:9px;color:#383838;font-weight:400;-webkit-text-stroke:0.18px #383838;">$</div>
<div class="a" style="left:520.60px;top:267.48px;font-size:9px;color:#383838;font-weight:400;-webkit-text-stroke:0.18px #383838;">$</div>
<div class="a" style="left:630.60px;top:267.48px;font-size:9px;color:#383838;font-weight:400;-webkit-text-stroke:0.18px #383838;">$</div>
<div class="a" style="left:690.00px;top:267.48px;font-size:9px;color:#383838;font-weight:400;-webkit-text-stroke:0.18px #383838;">$</div>
<div class="a" style="left:750.00px;top:267.48px;font-size:9px;color:#383838;font-weight:400;-webkit-text-stroke:0.18px #383838;">$</div>
<div class="a" style="right:497.40px;top:267.48px;font-size:9px;color:#383838;font-weight:400;-webkit-text-stroke:0.18px #383838;">3,933</div>
<div class="a" style="right:437.80px;top:267.48px;font-size:9px;color:#383838;font-weight:400;-webkit-text-stroke:0.18px #383838;">6,565</div>
<div class="a" style="right:375.00px;top:267.48px;font-size:9px;color:#383838;font-weight:400;-webkit-text-stroke:0.18px #383838;">(2,632)</div>
<div class="a" style="right:325.30px;top:267.48px;font-size:9px;color:#383838;font-weight:400;-webkit-text-stroke:0.18px #383838;">-66.9%</div>
<div class="a" style="right:269.00px;top:267.48px;font-size:9px;color:#383838;font-weight:400;-webkit-text-stroke:0.18px #383838;">3,933</div>
<div class="a" style="right:209.00px;top:267.48px;font-size:9px;color:#383838;font-weight:400;-webkit-text-stroke:0.18px #383838;">6,565</div>
<div class="a" style="right:146.50px;top:267.48px;font-size:9px;color:#383838;font-weight:400;-webkit-text-stroke:0.18px #383838;">(2,632)</div>
<div class="a" style="right:99.40px;top:267.48px;font-size:9px;color:#383838;font-weight:400;-webkit-text-stroke:0.18px #383838;">-66.9%</div>
<div class="a" style="left:199.00px;top:280.81px;width:0;"><div style="position:absolute;left:0;top:0;white-space:nowrap;transform:translateX(-50%) scaleX(1.0);transform-origin:50% 0;font-size:9px;color:#383838;font-weight:400;-webkit-text-stroke:0.18px #383838;">606</div></div>
<div class="a" style="left:228.70px;top:280.81px;font-size:9px;color:#383838;font-weight:400;transform:scaleX(0.9352999999999999);transform-origin:0 0;-webkit-text-stroke:0.18px #383838;">Parking Fees</div>
<div class="a" style="left:402.00px;top:280.81px;font-size:9px;color:#383838;font-weight:400;-webkit-text-stroke:0.18px #383838;">$</div>
<div class="a" style="left:461.00px;top:280.81px;font-size:9px;color:#383838;font-weight:400;-webkit-text-stroke:0.18px #383838;">$</div>
<div class="a" style="left:520.60px;top:280.81px;font-size:9px;color:#383838;font-weight:400;-webkit-text-stroke:0.18px #383838;">$</div>
<div class="a" style="left:630.60px;top:280.81px;font-size:9px;color:#383838;font-weight:400;-webkit-text-stroke:0.18px #383838;">$</div>
<div class="a" style="left:690.00px;top:280.81px;font-size:9px;color:#383838;font-weight:400;-webkit-text-stroke:0.18px #383838;">$</div>
<div class="a" style="left:750.00px;top:280.81px;font-size:9px;color:#383838;font-weight:400;-webkit-text-stroke:0.18px #383838;">$</div>
<div class="a" style="right:497.40px;top:280.81px;font-size:9px;color:#383838;font-weight:400;-webkit-text-stroke:0.18px #383838;">1,365</div>
<div class="a" style="right:437.80px;top:280.81px;font-size:9px;color:#383838;font-weight:400;-webkit-text-stroke:0.18px #383838;">1,685</div>
<div class="a" style="right:375.00px;top:280.81px;font-size:9px;color:#383838;font-weight:400;-webkit-text-stroke:0.18px #383838;">(320)</div>
<div class="a" style="right:325.30px;top:280.81px;font-size:9px;color:#383838;font-weight:400;-webkit-text-stroke:0.18px #383838;">-23.4%</div>
<div class="a" style="right:269.00px;top:280.81px;font-size:9px;color:#383838;font-weight:400;-webkit-text-stroke:0.18px #383838;">1,365</div>
<div class="a" style="right:209.00px;top:280.81px;font-size:9px;color:#383838;font-weight:400;-webkit-text-stroke:0.18px #383838;">1,685</div>
<div class="a" style="right:146.50px;top:280.81px;font-size:9px;color:#383838;font-weight:400;-webkit-text-stroke:0.18px #383838;">(320)</div>
<div class="a" style="right:99.40px;top:280.81px;font-size:9px;color:#383838;font-weight:400;-webkit-text-stroke:0.18px #383838;">-23.4%</div>
<div class="a" style="left:199.00px;top:294.14px;width:0;"><div style="position:absolute;left:0;top:0;white-space:nowrap;transform:translateX(-50%) scaleX(1.0);transform-origin:50% 0;font-size:9px;color:#383838;font-weight:400;-webkit-text-stroke:0.18px #383838;">607</div></div>
<div class="a" style="left:228.70px;top:294.14px;font-size:9px;color:#383838;font-weight:400;transform:scaleX(0.97908);transform-origin:0 0;-webkit-text-stroke:0.18px #383838;">Other Fines and Penalties</div>
<div class="a" style="left:402.00px;top:294.14px;font-size:9px;color:#383838;font-weight:400;-webkit-text-stroke:0.18px #383838;">$</div>
<div class="a" style="left:461.00px;top:294.14px;font-size:9px;color:#383838;font-weight:400;-webkit-text-stroke:0.18px #383838;">$</div>
<div class="a" style="left:520.60px;top:294.14px;font-size:9px;color:#383838;font-weight:400;-webkit-text-stroke:0.18px #383838;">$</div>
<div class="a" style="left:630.60px;top:294.14px;font-size:9px;color:#383838;font-weight:400;-webkit-text-stroke:0.18px #383838;">$</div>
<div class="a" style="left:690.00px;top:294.14px;font-size:9px;color:#383838;font-weight:400;-webkit-text-stroke:0.18px #383838;">$</div>
<div class="a" style="left:750.00px;top:294.14px;font-size:9px;color:#383838;font-weight:400;-webkit-text-stroke:0.18px #383838;">$</div>
<div class="a" style="right:497.40px;top:294.14px;font-size:9px;color:#383838;font-weight:400;-webkit-text-stroke:0.18px #383838;">7,532</div>
<div class="a" style="right:437.80px;top:294.14px;font-size:9px;color:#383838;font-weight:400;-webkit-text-stroke:0.18px #383838;">2,815</div>
<div class="a" style="right:378.00px;top:294.14px;font-size:9px;color:#383838;font-weight:400;-webkit-text-stroke:0.18px #383838;">4,717</div>
<div class="a" style="right:325.30px;top:294.14px;font-size:9px;color:#383838;font-weight:400;-webkit-text-stroke:0.18px #383838;">62.6%</div>
<div class="a" style="right:269.00px;top:294.14px;font-size:9px;color:#383838;font-weight:400;-webkit-text-stroke:0.18px #383838;">7,532</div>
<div class="a" style="right:209.00px;top:294.14px;font-size:9px;color:#383838;font-weight:400;-webkit-text-stroke:0.18px #383838;">2,815</div>
<div class="a" style="right:149.50px;top:294.14px;font-size:9px;color:#383838;font-weight:400;-webkit-text-stroke:0.18px #383838;">4,717</div>
<div class="a" style="right:99.40px;top:294.14px;font-size:9px;color:#383838;font-weight:400;-webkit-text-stroke:0.18px #383838;">62.6%</div>
<div class="a" style="left:199.00px;top:307.47px;width:0;"><div style="position:absolute;left:0;top:0;white-space:nowrap;transform:translateX(-50%) scaleX(1.0);transform-origin:50% 0;font-size:9px;color:#383838;font-weight:400;-webkit-text-stroke:0.18px #383838;">608</div></div>
<div class="a" style="left:228.70px;top:307.47px;font-size:9px;color:#383838;font-weight:400;transform:scaleX(1.0149);transform-origin:0 0;-webkit-text-stroke:0.18px #383838;">Interest</div>
<div class="a" style="left:402.00px;top:307.47px;font-size:9px;color:#383838;font-weight:400;-webkit-text-stroke:0.18px #383838;">$</div>
<div class="a" style="left:461.00px;top:307.47px;font-size:9px;color:#383838;font-weight:400;-webkit-text-stroke:0.18px #383838;">$</div>
<div class="a" style="left:520.60px;top:307.47px;font-size:9px;color:#383838;font-weight:400;-webkit-text-stroke:0.18px #383838;">$</div>
<div class="a" style="left:630.60px;top:307.47px;font-size:9px;color:#383838;font-weight:400;-webkit-text-stroke:0.18px #383838;">$</div>
<div class="a" style="left:690.00px;top:307.47px;font-size:9px;color:#383838;font-weight:400;-webkit-text-stroke:0.18px #383838;">$</div>
<div class="a" style="left:750.00px;top:307.47px;font-size:9px;color:#383838;font-weight:400;-webkit-text-stroke:0.18px #383838;">$</div>
<div class="a" style="right:497.40px;top:307.47px;font-size:9px;color:#383838;font-weight:400;-webkit-text-stroke:0.18px #383838;">2,899</div>
<div class="a" style="right:437.80px;top:307.47px;font-size:9px;color:#383838;font-weight:400;-webkit-text-stroke:0.18px #383838;">2,605</div>
<div class="a" style="right:378.00px;top:307.47px;font-size:9px;color:#383838;font-weight:400;-webkit-text-stroke:0.18px #383838;">294</div>
<div class="a" style="right:325.30px;top:307.47px;font-size:9px;color:#383838;font-weight:400;-webkit-text-stroke:0.18px #383838;">10.1%</div>
<div class="a" style="right:269.00px;top:307.47px;font-size:9px;color:#383838;font-weight:400;-webkit-text-stroke:0.18px #383838;">2,899</div>
<div class="a" style="right:209.00px;top:307.47px;font-size:9px;color:#383838;font-weight:400;-webkit-text-stroke:0.18px #383838;">2,605</div>
<div class="a" style="right:149.50px;top:307.47px;font-size:9px;color:#383838;font-weight:400;-webkit-text-stroke:0.18px #383838;">294</div>
<div class="a" style="right:99.40px;top:307.47px;font-size:9px;color:#383838;font-weight:400;-webkit-text-stroke:0.18px #383838;">10.1%</div>
<div class="a" style="left:199.00px;top:320.80px;width:0;"><div style="position:absolute;left:0;top:0;white-space:nowrap;transform:translateX(-50%) scaleX(1.0);transform-origin:50% 0;font-size:9px;color:#383838;font-weight:400;-webkit-text-stroke:0.18px #383838;">609</div></div>
<div class="a" style="left:228.70px;top:320.80px;font-size:9px;color:#383838;font-weight:400;transform:scaleX(0.995);transform-origin:0 0;-webkit-text-stroke:0.18px #383838;">Rentals - Other</div>
<div class="a" style="left:402.00px;top:320.80px;font-size:9px;color:#383838;font-weight:400;-webkit-text-stroke:0.18px #383838;">$</div>
<div class="a" style="left:461.00px;top:320.80px;font-size:9px;color:#383838;font-weight:400;-webkit-text-stroke:0.18px #383838;">$</div>
<div class="a" style="left:520.60px;top:320.80px;font-size:9px;color:#383838;font-weight:400;-webkit-text-stroke:0.18px #383838;">$</div>
<div class="a" style="left:630.60px;top:320.80px;font-size:9px;color:#383838;font-weight:400;-webkit-text-stroke:0.18px #383838;">$</div>
<div class="a" style="left:690.00px;top:320.80px;font-size:9px;color:#383838;font-weight:400;-webkit-text-stroke:0.18px #383838;">$</div>
<div class="a" style="left:750.00px;top:320.80px;font-size:9px;color:#383838;font-weight:400;-webkit-text-stroke:0.18px #383838;">$</div>
<div class="a" style="right:497.40px;top:320.80px;font-size:9px;color:#383838;font-weight:400;-webkit-text-stroke:0.18px #383838;">1,325</div>
<div class="a" style="right:437.80px;top:320.80px;font-size:9px;color:#383838;font-weight:400;-webkit-text-stroke:0.18px #383838;">1,205</div>
<div class="a" style="right:378.00px;top:320.80px;font-size:9px;color:#383838;font-weight:400;-webkit-text-stroke:0.18px #383838;">120</div>
<div class="a" style="right:325.30px;top:320.80px;font-size:9px;color:#383838;font-weight:400;-webkit-text-stroke:0.18px #383838;">9.1%</div>
<div class="a" style="right:269.00px;top:320.80px;font-size:9px;color:#383838;font-weight:400;-webkit-text-stroke:0.18px #383838;">1,325</div>
<div class="a" style="right:209.00px;top:320.80px;font-size:9px;color:#383838;font-weight:400;-webkit-text-stroke:0.18px #383838;">1,205</div>
<div class="a" style="right:149.50px;top:320.80px;font-size:9px;color:#383838;font-weight:400;-webkit-text-stroke:0.18px #383838;">120</div>
<div class="a" style="right:99.40px;top:320.80px;font-size:9px;color:#383838;font-weight:400;-webkit-text-stroke:0.18px #383838;">9.1%</div>
<div class="a" style="left:399px;top:331.6px;width:454px;height:1.1px;background:#5a5a5a"></div>
<div class="a" style="left:402.00px;top:335.25px;font-size:9px;color:#383838;font-weight:400;-webkit-text-stroke:0.18px #383838;">$</div>
<div class="a" style="left:461.00px;top:335.25px;font-size:9px;color:#383838;font-weight:400;-webkit-text-stroke:0.18px #383838;">$</div>
<div class="a" style="left:520.60px;top:335.25px;font-size:9px;color:#383838;font-weight:400;-webkit-text-stroke:0.18px #383838;">$</div>
<div class="a" style="left:630.60px;top:335.25px;font-size:9px;color:#383838;font-weight:400;-webkit-text-stroke:0.18px #383838;">$</div>
<div class="a" style="left:690.00px;top:335.25px;font-size:9px;color:#383838;font-weight:400;-webkit-text-stroke:0.18px #383838;">$</div>
<div class="a" style="left:750.00px;top:335.25px;font-size:9px;color:#383838;font-weight:400;-webkit-text-stroke:0.18px #383838;">$</div>
<div class="a" style="right:497.40px;top:335.25px;font-size:9px;color:#383838;font-weight:400;-webkit-text-stroke:0.18px #383838;">40,573</div>
<div class="a" style="right:437.80px;top:335.25px;font-size:9px;color:#383838;font-weight:400;-webkit-text-stroke:0.18px #383838;">36,315</div>
<div class="a" style="right:378.00px;top:335.25px;font-size:9px;color:#383838;font-weight:400;-webkit-text-stroke:0.18px #383838;">4,258</div>
<div class="a" style="right:325.30px;top:335.25px;font-size:9px;color:#383838;font-weight:400;-webkit-text-stroke:0.18px #383838;">10.5%</div>
<div class="a" style="right:269.00px;top:335.25px;font-size:9px;color:#383838;font-weight:400;-webkit-text-stroke:0.18px #383838;">40,573</div>
<div class="a" style="right:209.00px;top:335.25px;font-size:9px;color:#383838;font-weight:400;-webkit-text-stroke:0.18px #383838;">36,315</div>
<div class="a" style="right:149.50px;top:335.25px;font-size:9px;color:#383838;font-weight:400;-webkit-text-stroke:0.18px #383838;">4,258</div>
<div class="a" style="right:99.40px;top:335.25px;font-size:9px;color:#383838;font-weight:400;-webkit-text-stroke:0.18px #383838;">10.5%</div>
<div class="a" style="left:178.10px;top:335.25px;font-size:9px;color:#2e6cae;font-weight:700;transform:scaleX(1.01);transform-origin:0 0;">Sub-Total</div>
<div class="a" style="left:172.10px;top:363.27px;font-size:9.2px;color:#2e6cae;font-weight:700;transform:scaleX(0.965);transform-origin:0 0;">Uses of funds</div>
<div class="a" style="left:199.00px;top:376.96px;width:0;"><div style="position:absolute;left:0;top:0;white-space:nowrap;transform:translateX(-50%) scaleX(1.0);transform-origin:50% 0;font-size:9px;color:#383838;font-weight:400;-webkit-text-stroke:0.18px #383838;">700</div></div>
<div class="a" style="left:228.70px;top:376.96px;font-size:9px;color:#383838;font-weight:400;transform:scaleX(0.9661449999999999);transform-origin:0 0;-webkit-text-stroke:0.18px #383838;">Salaries and Benefits</div>
<div class="a" style="left:461.00px;top:376.96px;font-size:9px;color:#383838;font-weight:400;-webkit-text-stroke:0.18px #383838;">$</div>
<div class="a" style="left:520.60px;top:376.96px;font-size:9px;color:#383838;font-weight:400;-webkit-text-stroke:0.18px #383838;">$</div>
<div class="a" style="left:690.00px;top:376.96px;font-size:9px;color:#383838;font-weight:400;-webkit-text-stroke:0.18px #383838;">$</div>
<div class="a" style="left:750.00px;top:376.96px;font-size:9px;color:#383838;font-weight:400;-webkit-text-stroke:0.18px #383838;">$</div>
<div class="a" style="right:447.10px;top:376.96px;font-size:9px;color:#383838;font-weight:400;-webkit-text-stroke:0.18px #383838;">-</div>
<div class="a" style="right:387.30px;top:376.96px;font-size:9px;color:#383838;font-weight:400;-webkit-text-stroke:0.18px #383838;">-</div>
<div class="a" style="right:218.30px;top:376.96px;font-size:9px;color:#383838;font-weight:400;-webkit-text-stroke:0.18px #383838;">-</div>
<div class="a" style="right:158.80px;top:376.96px;font-size:9px;color:#383838;font-weight:400;-webkit-text-stroke:0.18px #383838;">-</div>
<div class="a" style="left:199.00px;top:390.29px;width:0;"><div style="position:absolute;left:0;top:0;white-space:nowrap;transform:translateX(-50%) scaleX(1.0);transform-origin:50% 0;font-size:9px;color:#383838;font-weight:400;-webkit-text-stroke:0.18px #383838;">702</div></div>
<div class="a" style="left:228.70px;top:390.29px;font-size:9px;color:#383838;font-weight:400;transform:scaleX(0.9751);transform-origin:0 0;-webkit-text-stroke:0.18px #383838;">Retiree Health Costs</div>
<div class="a" style="left:402.00px;top:390.29px;font-size:9px;color:#383838;font-weight:400;-webkit-text-stroke:0.18px #383838;">$</div>
<div class="a" style="left:461.00px;top:390.29px;font-size:9px;color:#383838;font-weight:400;-webkit-text-stroke:0.18px #383838;">$</div>
<div class="a" style="left:520.60px;top:390.29px;font-size:9px;color:#383838;font-weight:400;-webkit-text-stroke:0.18px #383838;">$</div>
<div class="a" style="left:630.60px;top:390.29px;font-size:9px;color:#383838;font-weight:400;-webkit-text-stroke:0.18px #383838;">$</div>
<div class="a" style="left:690.00px;top:390.29px;font-size:9px;color:#383838;font-weight:400;-webkit-text-stroke:0.18px #383838;">$</div>
<div class="a" style="left:750.00px;top:390.29px;font-size:9px;color:#383838;font-weight:400;-webkit-text-stroke:0.18px #383838;">$</div>
<div class="a" style="right:497.40px;top:390.29px;font-size:9px;color:#383838;font-weight:400;-webkit-text-stroke:0.18px #383838;">60,345</div>
<div class="a" style="right:437.80px;top:390.29px;font-size:9px;color:#383838;font-weight:400;-webkit-text-stroke:0.18px #383838;">59,658</div>
<div class="a" style="right:378.00px;top:390.29px;font-size:9px;color:#383838;font-weight:400;-webkit-text-stroke:0.18px #383838;">687</div>
<div class="a" style="right:325.30px;top:390.29px;font-size:9px;color:#383838;font-weight:400;-webkit-text-stroke:0.18px #383838;">1.1%</div>
<div class="a" style="right:269.00px;top:390.29px;font-size:9px;color:#383838;font-weight:400;-webkit-text-stroke:0.18px #383838;">60,345</div>
<div class="a" style="right:209.00px;top:390.29px;font-size:9px;color:#383838;font-weight:400;-webkit-text-stroke:0.18px #383838;">59,658</div>
<div class="a" style="right:149.50px;top:390.29px;font-size:9px;color:#383838;font-weight:400;-webkit-text-stroke:0.18px #383838;">687</div>
<div class="a" style="right:99.40px;top:390.29px;font-size:9px;color:#383838;font-weight:400;-webkit-text-stroke:0.18px #383838;">1.1%</div>
<div class="a" style="left:199.00px;top:403.62px;width:0;"><div style="position:absolute;left:0;top:0;white-space:nowrap;transform:translateX(-50%) scaleX(1.0);transform-origin:50% 0;font-size:9px;color:#383838;font-weight:400;-webkit-text-stroke:0.18px #383838;">703</div></div>
<div class="a" style="left:228.70px;top:403.62px;font-size:9px;color:#383838;font-weight:400;transform:scaleX(0.964155);transform-origin:0 0;-webkit-text-stroke:0.18px #383838;">Employee Salaries</div>
<div class="a" style="left:402.00px;top:403.62px;font-size:9px;color:#383838;font-weight:400;-webkit-text-stroke:0.18px #383838;">$</div>
<div class="a" style="left:461.00px;top:403.62px;font-size:9px;color:#383838;font-weight:400;-webkit-text-stroke:0.18px #383838;">$</div>
<div class="a" style="left:520.60px;top:403.62px;font-size:9px;color:#383838;font-weight:400;-webkit-text-stroke:0.18px #383838;">$</div>
<div class="a" style="left:630.60px;top:403.62px;font-size:9px;color:#383838;font-weight:400;-webkit-text-stroke:0.18px #383838;">$</div>
<div class="a" style="left:690.00px;top:403.62px;font-size:9px;color:#383838;font-weight:400;-webkit-text-stroke:0.18px #383838;">$</div>
<div class="a" style="left:750.00px;top:403.62px;font-size:9px;color:#383838;font-weight:400;-webkit-text-stroke:0.18px #383838;">$</div>
<div class="a" style="right:497.40px;top:403.62px;font-size:9px;color:#383838;font-weight:400;-webkit-text-stroke:0.18px #383838;">500,482</div>
<div class="a" style="right:437.80px;top:403.62px;font-size:9px;color:#383838;font-weight:400;-webkit-text-stroke:0.18px #383838;">471,558</div>
<div class="a" style="right:378.00px;top:403.62px;font-size:9px;color:#383838;font-weight:400;-webkit-text-stroke:0.18px #383838;">28,924</div>
<div class="a" style="right:325.30px;top:403.62px;font-size:9px;color:#383838;font-weight:400;-webkit-text-stroke:0.18px #383838;">5.8%</div>
<div class="a" style="right:269.00px;top:403.62px;font-size:9px;color:#383838;font-weight:400;-webkit-text-stroke:0.18px #383838;">500,482</div>
<div class="a" style="right:209.00px;top:403.62px;font-size:9px;color:#383838;font-weight:400;-webkit-text-stroke:0.18px #383838;">471,558</div>
<div class="a" style="right:149.50px;top:403.62px;font-size:9px;color:#383838;font-weight:400;-webkit-text-stroke:0.18px #383838;">28,924</div>
<div class="a" style="right:99.40px;top:403.62px;font-size:9px;color:#383838;font-weight:400;-webkit-text-stroke:0.18px #383838;">5.8%</div>
<div class="a" style="left:199.00px;top:416.95px;width:0;"><div style="position:absolute;left:0;top:0;white-space:nowrap;transform:translateX(-50%) scaleX(1.0);transform-origin:50% 0;font-size:9px;color:#383838;font-weight:400;-webkit-text-stroke:0.18px #383838;">704</div></div>
<div class="a" style="left:228.70px;top:416.95px;font-size:9px;color:#383838;font-weight:400;transform:scaleX(0.9412699999999999);transform-origin:0 0;-webkit-text-stroke:0.18px #383838;">Social Security (FICA)</div>
<div class="a" style="left:402.00px;top:416.95px;font-size:9px;color:#383838;font-weight:400;-webkit-text-stroke:0.18px #383838;">$</div>
<div class="a" style="left:461.00px;top:416.95px;font-size:9px;color:#383838;font-weight:400;-webkit-text-stroke:0.18px #383838;">$</div>
<div class="a" style="left:520.60px;top:416.95px;font-size:9px;color:#383838;font-weight:400;-webkit-text-stroke:0.18px #383838;">$</div>
<div class="a" style="left:630.60px;top:416.95px;font-size:9px;color:#383838;font-weight:400;-webkit-text-stroke:0.18px #383838;">$</div>
<div class="a" style="left:690.00px;top:416.95px;font-size:9px;color:#383838;font-weight:400;-webkit-text-stroke:0.18px #383838;">$</div>
<div class="a" style="left:750.00px;top:416.95px;font-size:9px;color:#383838;font-weight:400;-webkit-text-stroke:0.18px #383838;">$</div>
<div class="a" style="right:497.40px;top:416.95px;font-size:9px;color:#383838;font-weight:400;-webkit-text-stroke:0.18px #383838;">32,954</div>
<div class="a" style="right:437.80px;top:416.95px;font-size:9px;color:#383838;font-weight:400;-webkit-text-stroke:0.18px #383838;">30,876</div>
<div class="a" style="right:378.00px;top:416.95px;font-size:9px;color:#383838;font-weight:400;-webkit-text-stroke:0.18px #383838;">2,078</div>
<div class="a" style="right:325.30px;top:416.95px;font-size:9px;color:#383838;font-weight:400;-webkit-text-stroke:0.18px #383838;">6.3%</div>
<div class="a" style="right:269.00px;top:416.95px;font-size:9px;color:#383838;font-weight:400;-webkit-text-stroke:0.18px #383838;">32,954</div>
<div class="a" style="right:209.00px;top:416.95px;font-size:9px;color:#383838;font-weight:400;-webkit-text-stroke:0.18px #383838;">30,876</div>
<div class="a" style="right:149.50px;top:416.95px;font-size:9px;color:#383838;font-weight:400;-webkit-text-stroke:0.18px #383838;">2,078</div>
<div class="a" style="right:99.40px;top:416.95px;font-size:9px;color:#383838;font-weight:400;-webkit-text-stroke:0.18px #383838;">6.3%</div>
<div class="a" style="left:199.00px;top:430.28px;width:0;"><div style="position:absolute;left:0;top:0;white-space:nowrap;transform:translateX(-50%) scaleX(1.0);transform-origin:50% 0;font-size:9px;color:#383838;font-weight:400;-webkit-text-stroke:0.18px #383838;">705</div></div>
<div class="a" style="left:228.70px;top:430.28px;font-size:9px;color:#383838;font-weight:400;transform:scaleX(0.99898);transform-origin:0 0;-webkit-text-stroke:0.18px #383838;">Bonuses/Merit Increases</div>
<div class="a" style="left:402.00px;top:430.28px;font-size:9px;color:#383838;font-weight:400;-webkit-text-stroke:0.18px #383838;">$</div>
<div class="a" style="left:461.00px;top:430.28px;font-size:9px;color:#383838;font-weight:400;-webkit-text-stroke:0.18px #383838;">$</div>
<div class="a" style="left:520.60px;top:430.28px;font-size:9px;color:#383838;font-weight:400;-webkit-text-stroke:0.18px #383838;">$</div>
<div class="a" style="left:630.60px;top:430.28px;font-size:9px;color:#383838;font-weight:400;-webkit-text-stroke:0.18px #383838;">$</div>
<div class="a" style="left:690.00px;top:430.28px;font-size:9px;color:#383838;font-weight:400;-webkit-text-stroke:0.18px #383838;">$</div>
<div class="a" style="left:750.00px;top:430.28px;font-size:9px;color:#383838;font-weight:400;-webkit-text-stroke:0.18px #383838;">$</div>
<div class="a" style="right:497.40px;top:430.28px;font-size:9px;color:#383838;font-weight:400;-webkit-text-stroke:0.18px #383838;">22,844</div>
<div class="a" style="right:437.80px;top:430.28px;font-size:9px;color:#383838;font-weight:400;-webkit-text-stroke:0.18px #383838;">25,980</div>
<div class="a" style="right:375.00px;top:430.28px;font-size:9px;color:#383838;font-weight:400;-webkit-text-stroke:0.18px #383838;">(3,136)</div>
<div class="a" style="right:325.30px;top:430.28px;font-size:9px;color:#383838;font-weight:400;-webkit-text-stroke:0.18px #383838;">-13.7%</div>
<div class="a" style="right:269.00px;top:430.28px;font-size:9px;color:#383838;font-weight:400;-webkit-text-stroke:0.18px #383838;">22,844</div>
<div class="a" style="right:209.00px;top:430.28px;font-size:9px;color:#383838;font-weight:400;-webkit-text-stroke:0.18px #383838;">25,980</div>
<div class="a" style="right:146.50px;top:430.28px;font-size:9px;color:#383838;font-weight:400;-webkit-text-stroke:0.18px #383838;">(3,136)</div>
<div class="a" style="right:99.40px;top:430.28px;font-size:9px;color:#383838;font-weight:400;-webkit-text-stroke:0.18px #383838;">-13.7%</div>
<div class="a" style="left:199.00px;top:443.61px;width:0;"><div style="position:absolute;left:0;top:0;white-space:nowrap;transform:translateX(-50%) scaleX(1.0);transform-origin:50% 0;font-size:9px;color:#383838;font-weight:400;-webkit-text-stroke:0.18px #383838;">706</div></div>
<div class="a" style="left:228.70px;top:443.61px;font-size:9px;color:#383838;font-weight:400;transform:scaleX(1.0278349999999998);transform-origin:0 0;-webkit-text-stroke:0.18px #383838;">Medicare</div>
<div class="a" style="left:402.00px;top:443.61px;font-size:9px;color:#383838;font-weight:400;-webkit-text-stroke:0.18px #383838;">$</div>
<div class="a" style="left:461.00px;top:443.61px;font-size:9px;color:#383838;font-weight:400;-webkit-text-stroke:0.18px #383838;">$</div>
<div class="a" style="left:520.60px;top:443.61px;font-size:9px;color:#383838;font-weight:400;-webkit-text-stroke:0.18px #383838;">$</div>
<div class="a" style="left:630.60px;top:443.61px;font-size:9px;color:#383838;font-weight:400;-webkit-text-stroke:0.18px #383838;">$</div>
<div class="a" style="left:690.00px;top:443.61px;font-size:9px;color:#383838;font-weight:400;-webkit-text-stroke:0.18px #383838;">$</div>
<div class="a" style="left:750.00px;top:443.61px;font-size:9px;color:#383838;font-weight:400;-webkit-text-stroke:0.18px #383838;">$</div>
<div class="a" style="right:497.40px;top:443.61px;font-size:9px;color:#383838;font-weight:400;-webkit-text-stroke:0.18px #383838;">2,003</div>
<div class="a" style="right:437.80px;top:443.61px;font-size:9px;color:#383838;font-weight:400;-webkit-text-stroke:0.18px #383838;">2,160</div>
<div class="a" style="right:375.00px;top:443.61px;font-size:9px;color:#383838;font-weight:400;-webkit-text-stroke:0.18px #383838;">(157)</div>
<div class="a" style="right:325.30px;top:443.61px;font-size:9px;color:#383838;font-weight:400;-webkit-text-stroke:0.18px #383838;">-7.8%</div>
<div class="a" style="right:269.00px;top:443.61px;font-size:9px;color:#383838;font-weight:400;-webkit-text-stroke:0.18px #383838;">2,003</div>
<div class="a" style="right:209.00px;top:443.61px;font-size:9px;color:#383838;font-weight:400;-webkit-text-stroke:0.18px #383838;">2,160</div>
<div class="a" style="right:146.50px;top:443.61px;font-size:9px;color:#383838;font-weight:400;-webkit-text-stroke:0.18px #383838;">(157)</div>
<div class="a" style="right:99.40px;top:443.61px;font-size:9px;color:#383838;font-weight:400;-webkit-text-stroke:0.18px #383838;">-7.8%</div>
<div class="a" style="left:199.00px;top:456.94px;width:0;"><div style="position:absolute;left:0;top:0;white-space:nowrap;transform:translateX(-50%) scaleX(1.0);transform-origin:50% 0;font-size:9px;color:#383838;font-weight:400;-webkit-text-stroke:0.18px #383838;">709</div></div>
<div class="a" style="left:228.70px;top:456.94px;font-size:9px;color:#383838;font-weight:400;transform:scaleX(1.00495);transform-origin:0 0;-webkit-text-stroke:0.18px #383838;">Health Benefits</div>
<div class="a" style="left:402.00px;top:456.94px;font-size:9px;color:#383838;font-weight:400;-webkit-text-stroke:0.18px #383838;">$</div>
<div class="a" style="left:461.00px;top:456.94px;font-size:9px;color:#383838;font-weight:400;-webkit-text-stroke:0.18px #383838;">$</div>
<div class="a" style="left:520.60px;top:456.94px;font-size:9px;color:#383838;font-weight:400;-webkit-text-stroke:0.18px #383838;">$</div>
<div class="a" style="left:630.60px;top:456.94px;font-size:9px;color:#383838;font-weight:400;-webkit-text-stroke:0.18px #383838;">$</div>
<div class="a" style="left:690.00px;top:456.94px;font-size:9px;color:#383838;font-weight:400;-webkit-text-stroke:0.18px #383838;">$</div>
<div class="a" style="left:750.00px;top:456.94px;font-size:9px;color:#383838;font-weight:400;-webkit-text-stroke:0.18px #383838;">$</div>
<div class="a" style="right:497.40px;top:456.94px;font-size:9px;color:#383838;font-weight:400;-webkit-text-stroke:0.18px #383838;">9,612</div>
<div class="a" style="right:437.80px;top:456.94px;font-size:9px;color:#383838;font-weight:400;-webkit-text-stroke:0.18px #383838;">57,246</div>
<div class="a" style="right:375.00px;top:456.94px;font-size:9px;color:#383838;font-weight:400;-webkit-text-stroke:0.18px #383838;">(47,634)</div>
<div class="a" style="right:325.30px;top:456.94px;font-size:9px;color:#383838;font-weight:400;-webkit-text-stroke:0.18px #383838;">-495.6%</div>
<div class="a" style="right:269.00px;top:456.94px;font-size:9px;color:#383838;font-weight:400;-webkit-text-stroke:0.18px #383838;">9,612</div>
<div class="a" style="right:209.00px;top:456.94px;font-size:9px;color:#383838;font-weight:400;-webkit-text-stroke:0.18px #383838;">57,246</div>
<div class="a" style="right:146.50px;top:456.94px;font-size:9px;color:#383838;font-weight:400;-webkit-text-stroke:0.18px #383838;">(47,634)</div>
<div class="a" style="right:99.40px;top:456.94px;font-size:9px;color:#383838;font-weight:400;-webkit-text-stroke:0.18px #383838;">-495.6%</div>
<div class="a" style="left:199.00px;top:470.27px;width:0;"><div style="position:absolute;left:0;top:0;white-space:nowrap;transform:translateX(-50%) scaleX(1.0);transform-origin:50% 0;font-size:9px;color:#383838;font-weight:400;-webkit-text-stroke:0.18px #383838;">710</div></div>
<div class="a" style="left:228.70px;top:470.27px;font-size:9px;color:#383838;font-weight:400;transform:scaleX(0.97311);transform-origin:0 0;-webkit-text-stroke:0.18px #383838;">Life Insurance</div>
<div class="a" style="left:402.00px;top:470.27px;font-size:9px;color:#383838;font-weight:400;-webkit-text-stroke:0.18px #383838;">$</div>
<div class="a" style="left:461.00px;top:470.27px;font-size:9px;color:#383838;font-weight:400;-webkit-text-stroke:0.18px #383838;">$</div>
<div class="a" style="left:520.60px;top:470.27px;font-size:9px;color:#383838;font-weight:400;-webkit-text-stroke:0.18px #383838;">$</div>
<div class="a" style="left:630.60px;top:470.27px;font-size:9px;color:#383838;font-weight:400;-webkit-text-stroke:0.18px #383838;">$</div>
<div class="a" style="left:690.00px;top:470.27px;font-size:9px;color:#383838;font-weight:400;-webkit-text-stroke:0.18px #383838;">$</div>
<div class="a" style="left:750.00px;top:470.27px;font-size:9px;color:#383838;font-weight:400;-webkit-text-stroke:0.18px #383838;">$</div>
<div class="a" style="right:497.40px;top:470.27px;font-size:9px;color:#383838;font-weight:400;-webkit-text-stroke:0.18px #383838;">8,000</div>
<div class="a" style="right:437.80px;top:470.27px;font-size:9px;color:#383838;font-weight:400;-webkit-text-stroke:0.18px #383838;">7,488</div>
<div class="a" style="right:378.00px;top:470.27px;font-size:9px;color:#383838;font-weight:400;-webkit-text-stroke:0.18px #383838;">512</div>
<div class="a" style="right:325.30px;top:470.27px;font-size:9px;color:#383838;font-weight:400;-webkit-text-stroke:0.18px #383838;">6.4%</div>
<div class="a" style="right:269.00px;top:470.27px;font-size:9px;color:#383838;font-weight:400;-webkit-text-stroke:0.18px #383838;">8,000</div>
<div class="a" style="right:209.00px;top:470.27px;font-size:9px;color:#383838;font-weight:400;-webkit-text-stroke:0.18px #383838;">7,488</div>
<div class="a" style="right:149.50px;top:470.27px;font-size:9px;color:#383838;font-weight:400;-webkit-text-stroke:0.18px #383838;">512</div>
<div class="a" style="right:99.40px;top:470.27px;font-size:9px;color:#383838;font-weight:400;-webkit-text-stroke:0.18px #383838;">6.4%</div>
<div class="a" style="left:199.00px;top:483.60px;width:0;"><div style="position:absolute;left:0;top:0;white-space:nowrap;transform:translateX(-50%) scaleX(1.0);transform-origin:50% 0;font-size:9px;color:#383838;font-weight:400;-webkit-text-stroke:0.18px #383838;">711</div></div>
<div class="a" style="left:228.70px;top:483.60px;font-size:9px;color:#383838;font-weight:400;transform:scaleX(1.02485);transform-origin:0 0;-webkit-text-stroke:0.18px #383838;">Overtime</div>
<div class="a" style="left:461.00px;top:483.60px;font-size:9px;color:#383838;font-weight:400;-webkit-text-stroke:0.18px #383838;">$</div>
<div class="a" style="left:520.60px;top:483.60px;font-size:9px;color:#383838;font-weight:400;-webkit-text-stroke:0.18px #383838;">$</div>
<div class="a" style="left:690.00px;top:483.60px;font-size:9px;color:#383838;font-weight:400;-webkit-text-stroke:0.18px #383838;">$</div>
<div class="a" style="left:750.00px;top:483.60px;font-size:9px;color:#383838;font-weight:400;-webkit-text-stroke:0.18px #383838;">$</div>
<div class="a" style="right:447.10px;top:483.60px;font-size:9px;color:#383838;font-weight:400;-webkit-text-stroke:0.18px #383838;">-</div>
<div class="a" style="right:387.30px;top:483.60px;font-size:9px;color:#383838;font-weight:400;-webkit-text-stroke:0.18px #383838;">-</div>
<div class="a" style="right:218.30px;top:483.60px;font-size:9px;color:#383838;font-weight:400;-webkit-text-stroke:0.18px #383838;">-</div>
<div class="a" style="right:158.80px;top:483.60px;font-size:9px;color:#383838;font-weight:400;-webkit-text-stroke:0.18px #383838;">-</div>
<svg class="a" style="left:390px;top:380px" width="80" height="120" viewBox="390 380 80 120"><path d="M398.4 497.5 V388.4 H457.6 V497.5" fill="none" stroke="#217346" stroke-width="1.7" stroke-dasharray="4 3"/></svg>
<div class="a" style="left:163px;top:497.6px;width:756px;height:20px;background:#e6e6e6;border-top:1px solid #c4c4c4;border-bottom:1px solid #d2d2d2"></div>
<svg class="a" style="left:178px;top:503px" width="28" height="9" viewBox="178 503 28 9"><path d="M183.1 505.3 V509.9 L180.1 507.6 Z" fill="#b9b9b9"/><path d="M199.1 505.3 V509.9 L202.3 507.6 Z" fill="#b9b9b9"/></svg>
<div class="a" style="left:229.2px;top:497.6px;width:45.5px;height:17.1px;background:#fff;border-left:1px solid #c4c4c4;border-right:1px solid #c4c4c4;border-bottom:2px solid #4a7d5e"></div>
<div class="a" style="left:237.50px;top:500.94px;font-size:8.8px;color:#2f6b48;font-weight:700;transform:scaleX(0.965);transform-origin:0 0;-webkit-text-stroke:0.2px #2f6b48;">Sheet1</div>
<svg class="a" style="left:606px;top:503.5px" width="2" height="9" viewBox="0 0 2 9"><rect x="0.4" y="0.5" width="1" height="1.2" fill="#aaa"/><rect x="0.4" y="3.7" width="1" height="1.2" fill="#aaa"/><rect x="0.4" y="6.9" width="1" height="1.2" fill="#aaa"/></svg>
<div class="a" style="left:616px;top:498.6px;width:303px;height:18px;background:#ebebeb;border-left:1px solid #f6f6f6"></div>
<div class="a" style="left:627px;top:502.6px;width:282.3px;height:9.8px;background:#dcdcdc"></div>
<div class="a" style="left:617.5px;top:502.6px;width:9.5px;height:9.8px;background:#fff;border:1px solid #c6c6c6"></div>
<svg class="a" style="left:620px;top:505.3px" width="4" height="5" viewBox="0 0 4 5"><path d="M3.5 0 V5 L0.3 2.5 Z" fill="#555"/></svg>
<div class="a" style="left:627px;top:502.6px;width:147px;height:9.8px;background:#fff;border:1px solid #c6c6c6;border-left:none"></div>
<div class="a" style="left:909.3px;top:502.5px;width:10px;height:9.8px;background:#fff;border:1px solid #c6c6c6"></div>
<svg class="a" style="left:912.8px;top:505.2px" width="4" height="5" viewBox="0 0 4 5"><path d="M0.5 0 V5 L3.7 2.5 Z" fill="#555"/></svg>
<div class="a" style="left:919px;top:127.8px;width:15.5px;height:389.7px;background:#e8e8e8;border-left:1px solid #cfcfcf;border-bottom:1px solid #d2d2d2"></div>
<div class="a" style="left:922px;top:128.5px;width:10px;height:9.8px;background:#fff;border:1px solid #c6c6c6"></div>
<svg class="a" style="left:924.5px;top:131.5px" width="5" height="4" viewBox="0 0 5 4"><path d="M0 3.5 H5 L2.5 0.5 Z" fill="#555"/></svg>
<div class="a" style="left:922px;top:137.8px;width:10px;height:350px;background:#dadada"></div>
<div class="a" style="left:922px;top:137.8px;width:10px;height:98px;background:#fff;border:1px solid #c6c6c6;border-top:none"></div>
<div class="a" style="left:922px;top:487.5px;width:10px;height:9.8px;background:#fff;border:1px solid #c6c6c6"></div>
<svg class="a" style="left:924.5px;top:490.8px" width="5" height="4" viewBox="0 0 5 4"><path d="M0 0.5 H5 L2.5 3.5 Z" fill="#555"/></svg>
<div class="a" style="left:0;top:0;width:950px;height:533px;border:2.5px solid #b2b2b2;border-radius:14px;box-shadow:0 0 0 40px #fff;z-index:50"></div>
</body></html>
